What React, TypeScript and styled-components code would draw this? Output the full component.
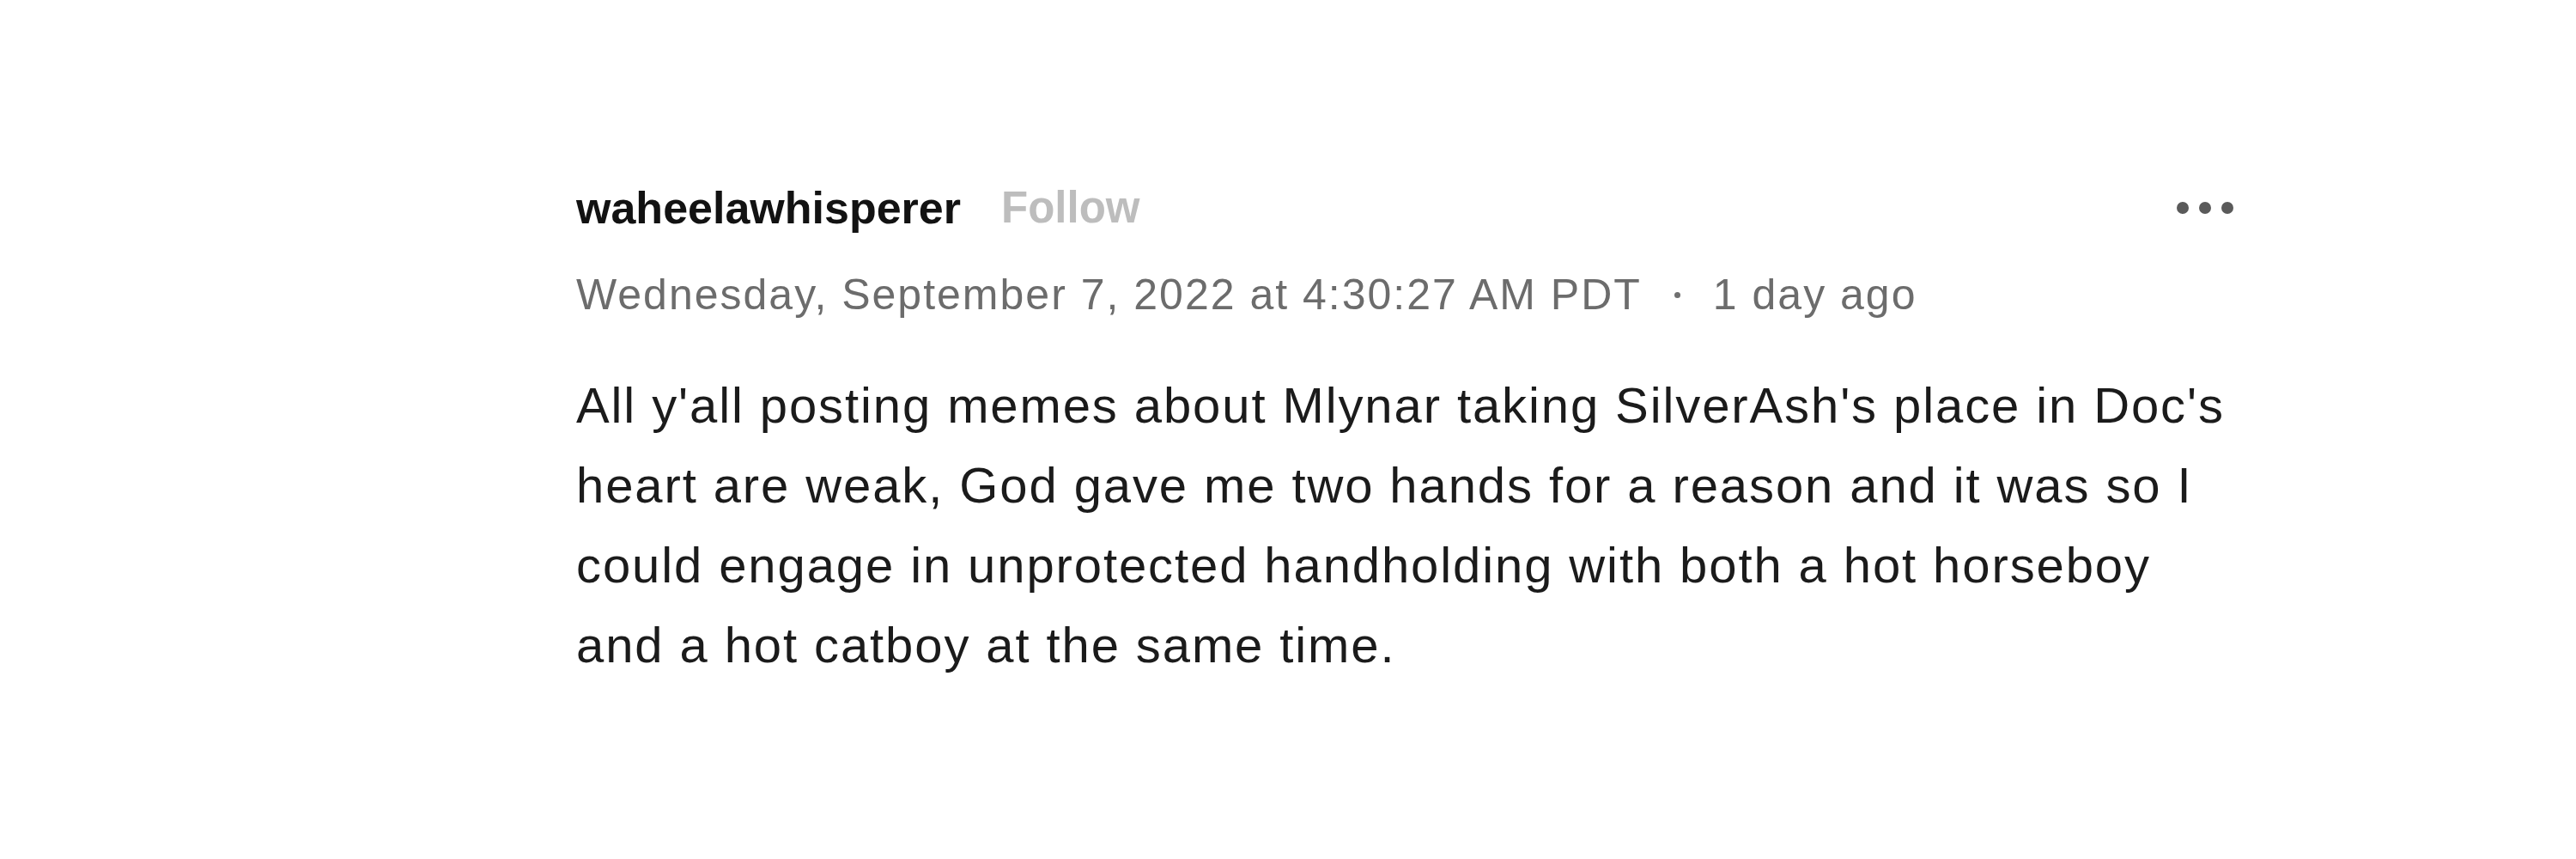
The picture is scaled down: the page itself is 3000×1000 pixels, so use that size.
import React from "react";
import styled, { createGlobalStyle } from "styled-components";

const Global = createGlobalStyle`
  html, body { margin: 0; padding: 0; background: #ffffff; }
  body { font-family: "Liberation Sans", Arial, sans-serif; }
`;

const Page = styled.div`
  width: 3000px;
  height: 1000px;
  background: #ffffff;
  box-sizing: border-box;
  padding: 212px 0 0 671px;
`;

const Comment = styled.article`
  width: 1930px;
  display: flex;
  flex-direction: column;
`;

const Header = styled.div`
  display: flex;
  align-items: center;
  height: 60px;
`;

const Username = styled.span`
  font-size: 52px;
  line-height: 60px;
  font-weight: 700;
  color: #121212;
`;

const FollowButton = styled.button`
  border: none;
  background: none;
  padding: 0;
  margin-left: 47px;
  font-family: "Liberation Sans", Arial, sans-serif;
  font-size: 51px;
  line-height: 60px;
  font-weight: 700;
  color: #bdbdbd;
  cursor: pointer;
`;

const MoreButton = styled.button`
  margin-left: auto;
  border: none;
  background: none;
  padding: 0;
  display: flex;
  gap: 12px;
  align-items: center;
  height: 60px;
  cursor: pointer;
`;

const Dot = styled.span`
  width: 14px;
  height: 14px;
  border-radius: 50%;
  background: #5a5a5a;
`;

const Meta = styled.div`
  margin-top: 43px;
  display: flex;
  align-items: center;
  font-size: 50px;
  line-height: 56px;
  letter-spacing: 2px;
  color: #6c6c6c;
`;

const Separator = styled.span`
  width: 7px;
  height: 7px;
  margin: 0 38px;
  border-radius: 50%;
  background: #707070;
`;

const Body = styled.p`
  margin: 54px 0 0 0;
  font-size: 58px;
  line-height: 93px;
  letter-spacing: 1.9px;
  color: #1b1b1b;
`;

export default function App() {
  return (
    <>
      <Global />
      <Page>
        <Comment>
          <Header>
            <Username>waheelawhisperer</Username>
            <FollowButton>Follow</FollowButton>
            <MoreButton aria-label="More options">
              <Dot />
              <Dot />
              <Dot />
            </MoreButton>
          </Header>
          <Meta>
            <span>Wednesday, September 7, 2022 at 4:30:27 AM PDT</span>
            <Separator />
            <span>1 day ago</span>
          </Meta>
          <Body>
            All y'all posting memes about Mlynar taking SilverAsh's place in Doc's heart are weak, God gave me two hands for a reason and it was so I could engage in unprotected handholding with both a hot horseboy and a hot catboy at the same time.
          </Body>
        </Comment>
      </Page>
    </>
  );
}
